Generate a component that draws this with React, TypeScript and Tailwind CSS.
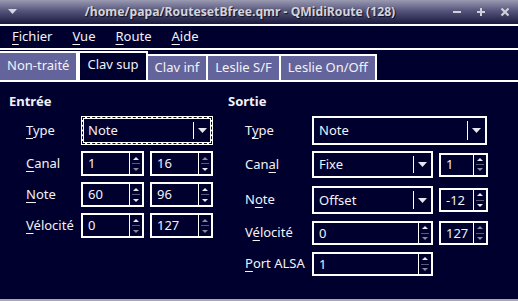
import React from "react";

const NAVY = "bg-[#00002f]";

function Mn({ pre = "", m, post = "" }: { pre?: string; m: string; post?: string }) {
  // mnemonic letter underlined, as in Qt menus and labels
  return (
    <span className="whitespace-nowrap">
      {pre}
      <span className="underline decoration-1 underline-offset-[3px]">{m}</span>
      {post}
    </span>
  );
}

function ArrowDown({ className = "" }: { className?: string }) {
  return (
    <svg width="9" height="5" viewBox="0 0 9 5" className={className}>
      <path d="M0 0 L9 0 L4.5 5 Z" fill="currentColor" />
    </svg>
  );
}

function Combo({
  text,
  w,
  h,
  focused = false,
}: {
  text: string;
  w: string;
  h: string;
  focused?: boolean;
}) {
  // focused combo gets a thick frame with a dashed focus line inside it
  const frame = focused
    ? "border-[3px] border-white outline-1 outline-dashed outline-[#00002f] outline-offset-[-2px]"
    : "border-2 border-white";
  return (
    <div className={`${w} ${h} ${frame}`}>
      <div className="flex h-full items-center">
        <span className={`flex-1 leading-none ${focused ? "pl-[4px]" : "pl-[5px]"}`}>{text}</span>
        <div className="my-[3px] w-px self-stretch bg-white" />
        <div className={`flex items-center justify-center text-[#e6e6ee] ${focused ? "w-[16px]" : "w-[17px]"}`}>
          <ArrowDown />
        </div>
      </div>
    </div>
  );
}

function Spin({
  value,
  w,
  h = "h-[25px]",
  upOn = true,
  downOn = true,
}: {
  value: string;
  w: string;
  h?: string;
  upOn?: boolean;
  downOn?: boolean;
}) {
  return (
    <div className={`${w} ${h} flex border-2 border-white`}>
      <span className="flex flex-1 items-center pl-[5px] leading-none">{value}</span>
      <div className="flex w-[13px] flex-col border-l border-white">
        <div className={`flex flex-1 items-center justify-center ${upOn ? "text-[#e6e6ee]" : "text-[#8a8a9a]"}`}>
          <svg width="6" height="3" viewBox="0 0 6 3">
            <path d="M0 3 L6 3 L3 0 Z" fill="currentColor" />
          </svg>
        </div>
        <div className="mx-[2px] h-px bg-[#5a5a78]" />
        <div className={`flex flex-1 items-center justify-center ${downOn ? "text-[#e6e6ee]" : "text-[#8a8a9a]"}`}>
          <svg width="6" height="3" viewBox="0 0 6 3">
            <path d="M0 0 L6 0 L3 3 Z" fill="currentColor" />
          </svg>
        </div>
      </div>
    </div>
  );
}

export default function App() {
  return (
    <div
      className={`flex h-[301px] w-[518px] flex-col overflow-hidden ${NAVY} font-['Noto_Sans',sans-serif] text-[13px] text-[#f2f2f6]`}
    >
      {/* title bar */}
      <div className="flex h-[24px] shrink-0 items-center bg-[linear-gradient(to_bottom,#9a9ab2,#55557c_45%,#1a1a3c)]">
        <div className="flex w-[24px] justify-center text-[#d6d6e0]">
          <svg width="9" height="6" viewBox="0 0 9 6">
            <path d="M0 0 L9 0 L4.5 5 Z" fill="currentColor" />
          </svg>
        </div>
        <div className="flex-1 pl-[4px] text-center text-[12.2px] font-bold text-[#d4d4dc] [text-shadow:1px_1px_1px_#101028]">
          /home/papa/RoutesetBfree.qmr - QMidiRoute (128)
        </div>
        <div className="flex items-center gap-[14px] pr-[8px] text-[#d0d0d8]">
          <svg width="10" height="10" viewBox="0 0 10 10">
            <rect x="1" y="4" width="8" height="2" fill="currentColor" />
          </svg>
          <svg width="10" height="10" viewBox="0 0 10 10">
            <rect x="1" y="4" width="8" height="2" fill="currentColor" />
            <rect x="4" y="1" width="2" height="8" fill="currentColor" />
          </svg>
          <svg width="10" height="10" viewBox="0 0 10 10">
            <path d="M1.5 1.5 L8.5 8.5 M8.5 1.5 L1.5 8.5" stroke="currentColor" strokeWidth="2.2" />
          </svg>
        </div>
      </div>
      <div className="h-[2px] shrink-0 bg-white" />

      {/* menu bar */}
      <div className="flex h-[22px] shrink-0 items-center gap-[20px] pl-[12px]">
        <Mn m="F" post="ichier" />
        <Mn m="V" post="ue" />
        <Mn m="R" post="oute" />
        <Mn m="A" post="ide" />
      </div>
      <div className="h-[2px] shrink-0 bg-white" />

      {/* tabs */}
      <div className="flex h-[30px] shrink-0 items-end pt-px">
        <div className="flex h-[29px] items-center border-t-2 border-r-2 border-white bg-[#64649c] px-[7px] pb-px">
          Non-traité
        </div>
        <div className="flex h-[29px] items-center border-x-2 border-t-2 border-white px-[7px] pb-[3px]">
          Clav sup
        </div>
        <div className="flex h-[26px] items-center border-t-2 border-r-2 border-white bg-[#64649c] px-[7px]">
          Clav inf
        </div>
        <div className="flex h-[26px] items-center border-t-2 border-r-2 border-white bg-[#64649c] px-[7px]">
          Leslie S/F
        </div>
        <div className="flex h-[26px] items-center border-t-2 border-r-2 border-white bg-[#64649c] px-[7px]">
          Leslie On/Off
        </div>
      </div>
      <div className="h-[2px] shrink-0 bg-white" />

      {/* content */}
      <div className="flex flex-1">
        {/* Entrée */}
        <div className="flex w-[220px] flex-col pt-[10px]">
          <div className="h-[18px] pl-[9px] font-bold leading-[18px]">Entrée</div>
          <div className="mt-[6px] flex flex-col gap-[6px] pl-[26px]">
            <div className="flex items-center">
              <div className="w-[55px]">
                <Mn m="T" post="ype" />
              </div>
              <Combo text="Note" w="w-[132px]" h="h-[29px]" focused />
            </div>
            <div className="flex items-center gap-[6px]">
              <div className="w-[49px]">
                <Mn m="C" post="anal" />
              </div>
              <Spin value="1" w="w-[63px]" downOn={false} />
              <Spin value="16" w="w-[63px]" upOn={false} />
            </div>
            <div className="flex items-center gap-[6px]">
              <div className="w-[49px]">
                <Mn m="N" post="ote" />
              </div>
              <Spin value="60" w="w-[63px]" />
              <Spin value="96" w="w-[63px]" />
            </div>
            <div className="flex items-center gap-[6px]">
              <div className="w-[49px]">
                <Mn m="V" post="élocité" />
              </div>
              <Spin value="0" w="w-[63px]" downOn={false} />
              <Spin value="127" w="w-[63px]" upOn={false} downOn={false} />
            </div>
          </div>
        </div>

        {/* Sortie */}
        <div className="flex flex-1 flex-col pt-[10px]">
          <div className="h-[18px] pl-[8px] font-bold leading-[18px]">Sortie</div>
          <div className="mt-[6px] flex flex-col pl-[25px]">
            <div className="flex items-center">
              <div className="w-[67px]">
                <Mn pre="T" m="y" post="pe" />
              </div>
              <Combo text="Note" w="w-[175px]" h="h-[29px]" />
            </div>
            <div className="mt-[6px] flex items-center gap-[6px]">
              <div className="w-[61px]">
                <Mn pre="Can" m="a" post="l" />
              </div>
              <Combo text="Fixe" w="w-[121px]" h="h-[27px]" />
              <Spin value="1" w="w-[49px]" h="h-[24px]" downOn={false} />
            </div>
            <div className="mt-[8px] flex items-center gap-[6px]">
              <div className="w-[61px]">
                <Mn pre="N" m="o" post="te" />
              </div>
              <Combo text="Offset" w="w-[121px]" h="h-[28px]" />
              <Spin value="-12" w="w-[49px]" h="h-[24px]" />
            </div>
            <div className="mt-[7px] flex items-center gap-[6px]">
              <div className="w-[61px]">
                <Mn pre="V" m="é" post="locité" />
              </div>
              <Spin value="0" w="w-[121px]" h="h-[24px]" downOn={false} />
              <Spin value="127" w="w-[49px]" h="h-[24px]" upOn={false} downOn={false} />
            </div>
            <div className="mt-[7px] flex items-center">
              <div className="w-[67px]">
                <Mn m="P" post="ort ALSA" />
              </div>
              <Spin value="1" w="w-[121px]" h="h-[24px]" downOn={false} />
            </div>
          </div>
        </div>
      </div>
      <div className="h-[2px] shrink-0 bg-[#a8a8b0]" />
    </div>
  );
}
